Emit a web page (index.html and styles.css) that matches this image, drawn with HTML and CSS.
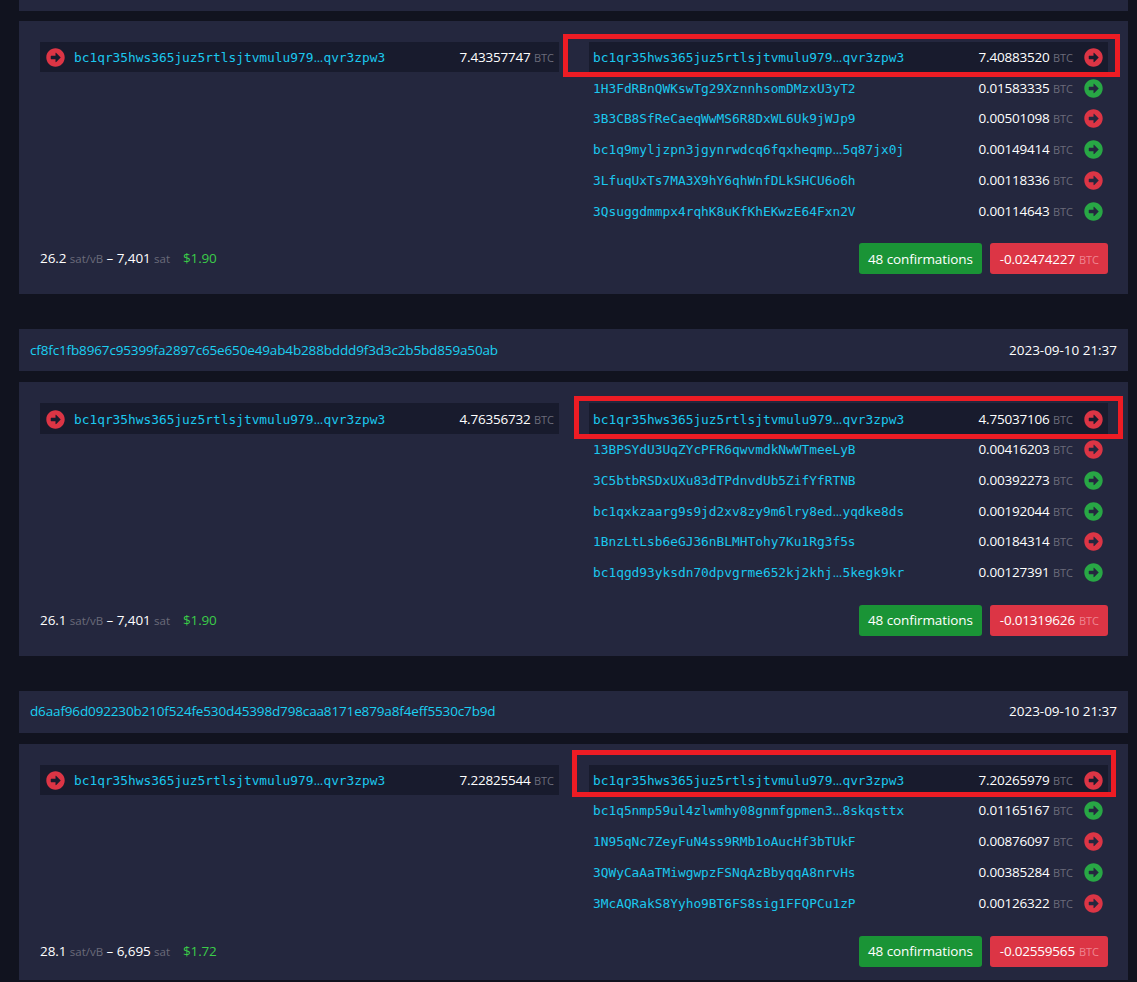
FILE: index.html
```html
<!DOCTYPE html>
<html lang="en">
<head>
<meta charset="utf-8">
<title>Transactions</title>
<link rel="stylesheet" href="styles.css">
</head>
<body>
<svg class="defs" width="0" height="0" aria-hidden="true"><symbol id="arrow" viewBox="0 0 512 512"><path fill="currentColor" d="M256 8c137 0 248 111 248 248S393 504 256 504 8 393 8 256 119 8 256 8zM140 300h116v70.9c0 10.7 13 16.1 20.5 8.5l114.3-114.9c4.7-4.7 4.7-12.2 0-16.9l-114.3-115c-7.6-7.6-20.5-2.2-20.5 8.5V212H140c-6.6 0-12 5.4-12 12v64c0 6.6 5.4 12 12 12z"/></symbol></svg>
<main class="page">
  <div class="stub"></div>

  <section class="card">
    <div class="cols">
      <div class="col">
        <div class="row hl"><svg class="ico red"><use href="#arrow"/></svg><a class="addr">bc1qr35hws365juz5rtlsjtvmulu979<span class="dots">…</span>qvr3zpw3</a><span class="amt">7.43357747 <span class="unit">BTC</span></span></div>
      </div>
      <div class="col">
        <div class="row hl"><a class="addr">bc1qr35hws365juz5rtlsjtvmulu979<span class="dots">…</span>qvr3zpw3</a><span class="amt">7.40883520 <span class="unit">BTC</span></span><svg class="ico red"><use href="#arrow"/></svg></div>
        <div class="row"><a class="addr">1H3FdRBnQWKswTg29XznnhsomDMzxU3yT2</a><span class="amt">0.01583335 <span class="unit">BTC</span></span><svg class="ico green"><use href="#arrow"/></svg></div>
        <div class="row"><a class="addr">3B3CB8SfReCaeqWwMS6R8DxWL6Uk9jWJp9</a><span class="amt">0.00501098 <span class="unit">BTC</span></span><svg class="ico red"><use href="#arrow"/></svg></div>
        <div class="row"><a class="addr">bc1q9myljzpn3jgynrwdcq6fqxheqmp<span class="dots">…</span>5q87jx0j</a><span class="amt">0.00149414 <span class="unit">BTC</span></span><svg class="ico green"><use href="#arrow"/></svg></div>
        <div class="row"><a class="addr">3LfuqUxTs7MA3X9hY6qhWnfDLkSHCU6o6h</a><span class="amt">0.00118336 <span class="unit">BTC</span></span><svg class="ico red"><use href="#arrow"/></svg></div>
        <div class="row"><a class="addr">3Qsuggdmmpx4rqhK8uKfKhEKwzE64Fxn2V</a><span class="amt">0.00114643 <span class="unit">BTC</span></span><svg class="ico green"><use href="#arrow"/></svg></div>
      </div>
    </div>
    <div class="summary">
      <div class="fee"><span class="val">26.2</span> <span class="unit">sat/vB</span> <span class="val">– 7,401</span> <span class="unit">sat</span><span class="usd">$1.90</span></div>
      <div class="btns"><span class="btn ok">48 confirmations</span><span class="btn bad">-0.02474227 <span class="unit-btn">BTC</span></span></div>
    </div>
    <div class="mark m1"></div>
  </section>

  <header class="txhead"><a class="hash">cf8fc1fb8967c95399fa2897c65e650e49ab4b288bddd9f3d3c2b5bd859a50ab</a><time class="when">2023-09-10 21:37</time></header>
  <section class="card">
    <div class="cols">
      <div class="col">
        <div class="row hl"><svg class="ico red"><use href="#arrow"/></svg><a class="addr">bc1qr35hws365juz5rtlsjtvmulu979<span class="dots">…</span>qvr3zpw3</a><span class="amt">4.76356732 <span class="unit">BTC</span></span></div>
      </div>
      <div class="col">
        <div class="row hl"><a class="addr">bc1qr35hws365juz5rtlsjtvmulu979<span class="dots">…</span>qvr3zpw3</a><span class="amt">4.75037106 <span class="unit">BTC</span></span><svg class="ico red"><use href="#arrow"/></svg></div>
        <div class="row"><a class="addr">13BPSYdU3UqZYcPFR6qwvmdkNwWTmeeLyB</a><span class="amt">0.00416203 <span class="unit">BTC</span></span><svg class="ico red"><use href="#arrow"/></svg></div>
        <div class="row"><a class="addr">3C5btbRSDxUXu83dTPdnvdUb5ZifYfRTNB</a><span class="amt">0.00392273 <span class="unit">BTC</span></span><svg class="ico green"><use href="#arrow"/></svg></div>
        <div class="row"><a class="addr">bc1qxkzaarg9s9jd2xv8zy9m6lry8ed<span class="dots">…</span>yqdke8ds</a><span class="amt">0.00192044 <span class="unit">BTC</span></span><svg class="ico green"><use href="#arrow"/></svg></div>
        <div class="row"><a class="addr">1BnzLtLsb6eGJ36nBLMHTohy7Ku1Rg3f5s</a><span class="amt">0.00184314 <span class="unit">BTC</span></span><svg class="ico red"><use href="#arrow"/></svg></div>
        <div class="row"><a class="addr">bc1qgd93yksdn70dpvgrme652kj2khj<span class="dots">…</span>5kegk9kr</a><span class="amt">0.00127391 <span class="unit">BTC</span></span><svg class="ico green"><use href="#arrow"/></svg></div>
      </div>
    </div>
    <div class="summary">
      <div class="fee"><span class="val">26.1</span> <span class="unit">sat/vB</span> <span class="val">– 7,401</span> <span class="unit">sat</span><span class="usd">$1.90</span></div>
      <div class="btns"><span class="btn ok">48 confirmations</span><span class="btn bad">-0.01319626 <span class="unit-btn">BTC</span></span></div>
    </div>
    <div class="mark m2"></div>
  </section>

  <header class="txhead"><a class="hash">d6aaf96d092230b210f524fe530d45398d798caa8171e879a8f4eff5530c7b9d</a><time class="when">2023-09-10 21:37</time></header>
  <section class="card last">
    <div class="cols">
      <div class="col">
        <div class="row hl"><svg class="ico red"><use href="#arrow"/></svg><a class="addr">bc1qr35hws365juz5rtlsjtvmulu979<span class="dots">…</span>qvr3zpw3</a><span class="amt">7.22825544 <span class="unit">BTC</span></span></div>
      </div>
      <div class="col">
        <div class="row hl"><a class="addr">bc1qr35hws365juz5rtlsjtvmulu979<span class="dots">…</span>qvr3zpw3</a><span class="amt">7.20265979 <span class="unit">BTC</span></span><svg class="ico red"><use href="#arrow"/></svg></div>
        <div class="row"><a class="addr">bc1q5nmp59ul4zlwmhy08gnmfgpmen3<span class="dots">…</span>8skqsttx</a><span class="amt">0.01165167 <span class="unit">BTC</span></span><svg class="ico green"><use href="#arrow"/></svg></div>
        <div class="row"><a class="addr">1N95qNc7ZeyFuN4ss9RMb1oAucHf3bTUkF</a><span class="amt">0.00876097 <span class="unit">BTC</span></span><svg class="ico red"><use href="#arrow"/></svg></div>
        <div class="row"><a class="addr">3QWyCaAaTMiwgwpzFSNqAzBbyqqA8nrvHs</a><span class="amt">0.00385284 <span class="unit">BTC</span></span><svg class="ico green"><use href="#arrow"/></svg></div>
        <div class="row"><a class="addr">3McAQRakS8Yyho9BT6FS8sig1FFQPCu1zP</a><span class="amt">0.00126322 <span class="unit">BTC</span></span><svg class="ico red"><use href="#arrow"/></svg></div>
      </div>
    </div>
    <div class="summary">
      <div class="fee"><span class="val">28.1</span> <span class="unit">sat/vB</span> <span class="val">– 6,695</span> <span class="unit">sat</span><span class="usd">$1.72</span></div>
      <div class="btns"><span class="btn ok">48 confirmations</span><span class="btn bad">-0.02559565 <span class="unit-btn">BTC</span></span></div>
    </div>
    <div class="mark m3"></div>
  </section>
</main>
</body>
</html>
```
FILE: styles.css
```css
html, body { margin: 0; padding: 0; background: #11131f; }
body { height: 982px; overflow: hidden; color: #fff; font: 13.5px/21px "Open Sans", "Noto Sans", sans-serif; letter-spacing: -.2px; }
.defs { position: absolute; }
.page { display: flex; flex-direction: column; padding: 0 9px 0 19px; }
.stub { height: 10.6px; background: #24273e; margin-bottom: 10px; }
.card { position: relative; background: #24273e; padding: 21.3px 20px 20px 21px; margin-bottom: 34.7px; }
.card.last { padding-bottom: 13.35px; margin-bottom: 0; }
.txhead { display: flex; justify-content: space-between; align-items: center; height: 42px; background: #24273e; padding: 0 11px 0 11px; margin-bottom: 11px; }
.hash { color: #1bd0f2; font-size: 13.5px; letter-spacing: -.145px; }
.when { font-size: 13.5px; letter-spacing: -.03px; }
.cols { display: grid; grid-template-columns: 519px 519px; column-gap: 30px; }
.row { display: flex; align-items: center; height: 30.75px; padding: 0 5px 0 4px; box-sizing: border-box; }
.col:first-child .row { padding: 1px 5px 0 6px; }
.row.hl { background: #181b2d; height: 30.5px; margin-bottom: .25px; padding-top: 1px; }
.ico { width: 19px; height: 19px; flex: none; }
.red { color: #dc3545; }
.green { color: #28a745; }
.col:first-child .ico { margin-right: 9px; }
.col:last-child .ico { margin-left: 11px; }
.addr { color: #1bc8ee; font: 12.83px/21px "DejaVu Sans Mono", monospace; letter-spacing: 0; white-space: nowrap; }
.dots { display: inline-block; width: 10px; font-family: "Open Sans", sans-serif; font-size: 12px; text-align: center; }
.amt { margin-left: auto; white-space: nowrap; }
.unit { color: #6b6b7a; font-size: 11px; letter-spacing: 0; }
.summary { display: flex; justify-content: space-between; align-items: center; margin-top: 17px; }
.fee .unit { font-size: 11.5px; }
.fee .val { letter-spacing: -.05px; }
.usd { color: #3bcc49; margin-left: 13px; }
.btns { display: flex; gap: 8px; }
.btn { display: flex; align-items: center; gap: 4px; height: 31px; padding: 1px 9px 0; box-sizing: border-box; border-radius: 3px; white-space: nowrap; }
.ok { background: #1a9436; letter-spacing: -.1px; }
.bad { background: #dc3545; padding-left: 10px; }
.unit-btn { color: #ee8591; font-size: 11px; letter-spacing: 0; }
.mark { position: absolute; border: 5px solid #ed1c24; box-sizing: border-box; pointer-events: none; }
.m1 { left: 544px; top: 13.4px; width: 557px; height: 43px; }
.m2 { left: 555px; top: 13.9px; width: 549px; height: 43px; }
.m3 { left: 553px; top: 6.4px; width: 544px; height: 47px; }
```
